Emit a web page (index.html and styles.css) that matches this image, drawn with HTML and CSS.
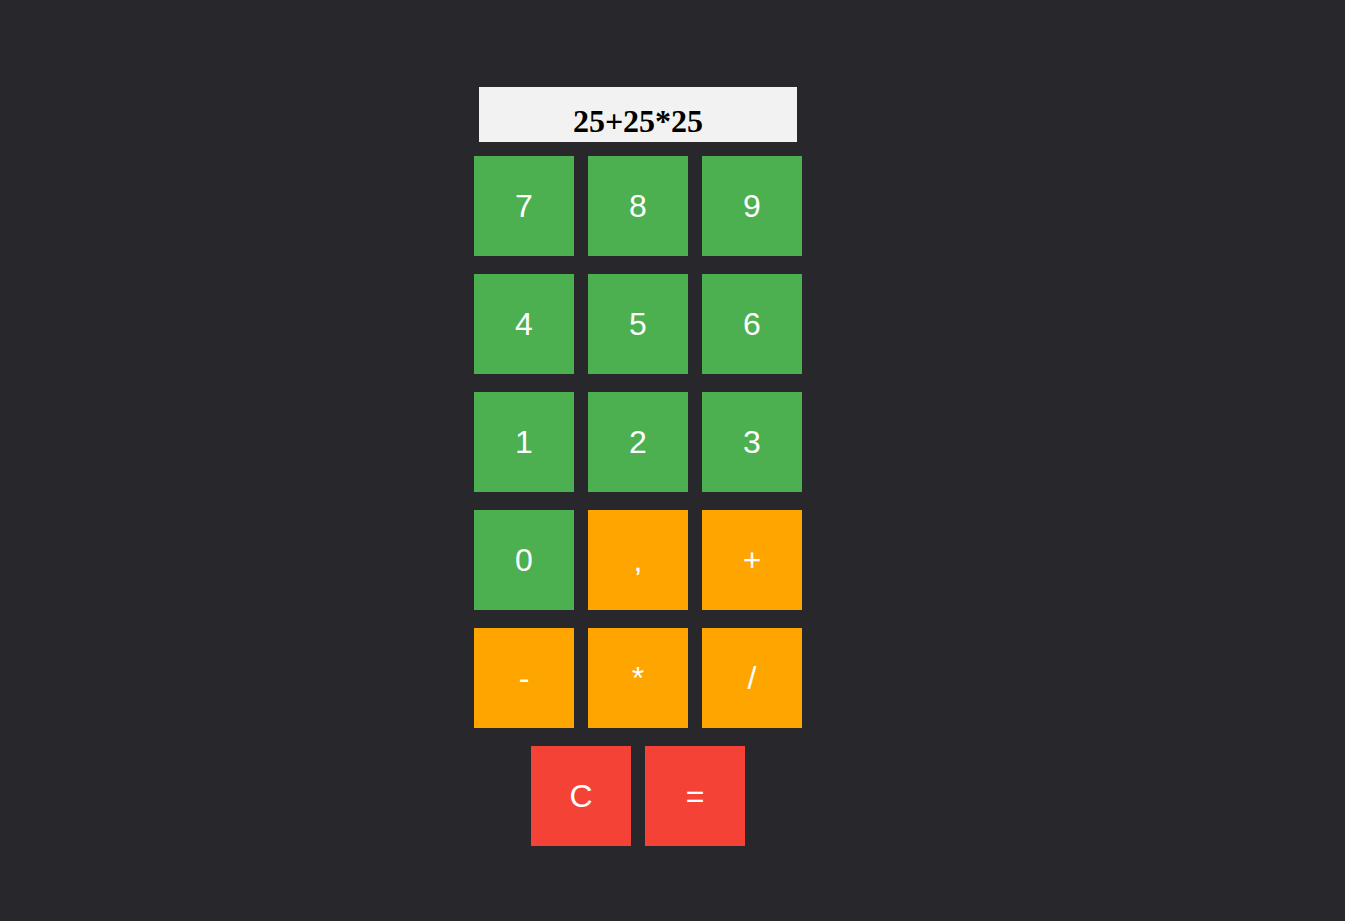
FILE: index.html
```html
<!DOCTYPE html>
<html>
<head>
<meta charset="utf-8">
<link rel="stylesheet" href="styles.css">
</head>
<body>
<div class="calc">
  <div class="display">25+25*25</div>
  <div class="keys">
    <div class="key num">7</div>
    <div class="key num">8</div>
    <div class="key num">9</div>
    <div class="key num">4</div>
    <div class="key num">5</div>
    <div class="key num">6</div>
    <div class="key num">1</div>
    <div class="key num">2</div>
    <div class="key num">3</div>
    <div class="key num">0</div>
    <div class="key op">,</div>
    <div class="key op">+</div>
    <div class="key op">-</div>
    <div class="key op">*</div>
    <div class="key op">/</div>
  </div>
  <div class="actions">
    <div class="key act">C</div>
    <div class="key act">=</div>
  </div>
</div>
</body>
</html>
```
FILE: styles.css
```css
html, body {
  margin: 0;
  padding: 0;
  background: #28272c;
  height: 100%;
}
.calc {
  width: 328px;
  margin-left: 474px;
  padding-top: 87px;
  display: flex;
  flex-direction: column;
  align-items: center;
}
.display {
  width: 318px;
  height: 55px;
  box-sizing: border-box;
  background: #f2f2f2;
  color: #000;
  font-family: "Liberation Serif", serif;
  font-weight: bold;
  font-size: 32px;
  text-align: center;
  line-height: 32px;
  padding-top: 18px;
  margin-bottom: 14px;
}
.keys {
  display: grid;
  grid-template-columns: repeat(3, 100px);
  column-gap: 14px;
  row-gap: 18px;
}
.actions {
  display: flex;
  gap: 14px;
  margin-top: 18px;
}
.key {
  width: 100px;
  height: 100px;
  display: flex;
  align-items: center;
  justify-content: center;
  color: #fff;
  font-family: "Liberation Sans", Arial, sans-serif;
  font-size: 32px;
}
.num { background: #4caf50; }
.op { background: #ffa500; }
.act { background: #f44336; }
```
